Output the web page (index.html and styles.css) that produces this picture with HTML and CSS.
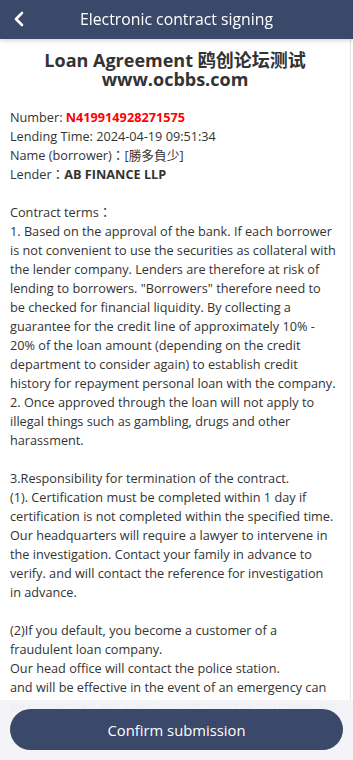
FILE: index.html
```html
<!DOCTYPE html>
<html>
  <head>
    <meta charset="utf-8" />
    <meta name="viewport" content="width=device-width, initial-scale=1" />
    <title>Electronic contract signing</title>
    <link rel="stylesheet" href="styles.css">
  </head>

  <body>
    <div class="header">
      <a class="back" href="#">
        <svg width="14" height="16" viewBox="0 0 14 16">
          <polyline points="10,2 4,8 10,14" fill="none" stroke="#fff" stroke-width="2.6" stroke-linecap="round" stroke-linejoin="round" />
        </svg>
      </a>
      <div class="title">Electronic contract signing</div>
    </div>

    <div class="content">
      <h2 class="doc-title">Loan Agreement 鸥创论坛测试<br />www.ocbbs.com</h2>

      <div class="info">
        Number: <b class="red">N419914928271575</b><br />
        Lending Time: 2024-04-19 09:51:34<br />
        Name (borrower)：[勝多負少]<br />
        Lender：<b>AB FINANCE LLP</b>
      </div>

      <div class="terms">
        <br />
        Contract terms：<br />
        1. Based on the approval of the bank. If each borrower is not convenient to use the securities as collateral with the lender company. Lenders are therefore at risk of lending to borrowers. "Borrowers" therefore need to be checked for financial liquidity. By collecting a guarantee for the credit line of approximately 10% - 20% of the loan amount (depending on the credit department to consider again) to establish credit history for repayment personal loan with the company.<br />
        2. Once approved through the loan will not apply to illegal things such as gambling, drugs and other harassment.<br />
        <br />
        3.Responsibility for termination of the contract.<br />
        (1). Certification must be completed within 1 day if certification is not completed within the specified time. Our headquarters will require a lawyer to intervene in the investigation. Contact your family in advance to verify. and will contact the reference for investigation in advance.<br />
        <br />
        (2)If you default, you become a customer of a fraudulent loan company.<br />
        Our head office will contact the police station.<br />
        and will be effective in the event of an emergency can be prosecuted and sued in court, and the borrower will be responsible for all costs of the lawsuit and all legal consequences.<br />
        <br />
        4. Both parties agree that this contract shall take effect from the date of signing.
      </div>
    </div>

    <div class="footer">
      <button class="submit">Confirm submission</button>
    </div>
  </body>
</html>
```

FILE: styles.css
```css
html {
  font-family: "Open Sans", "Noto Sans CJK TC", sans-serif;
  font-size: 12.7px;
}

body {
  margin: 0;
  background: #fff;
  color: #333;
}

.header {
  position: fixed;
  top: 0;
  left: 0;
  right: 0;
  height: 39px;
  background: #3a4869;
  box-shadow: 0 2px 4px rgba(0, 0, 0, 0.15);
  display: flex;
  align-items: center;
  justify-content: center;
  z-index: 2;
}

.back {
  position: absolute;
  left: 12px;
  top: 11px;
  display: flex;
}

.title {
  color: #fff;
  font-size: 15.8px;
  margin-top: -1px;
}

.content {
  padding: 39px 13px 80px 10px;
  border-right: 1px solid #e4e4e4;
  margin-right: 2px;
}

.doc-title {
  margin: 12px -3px 0 0;
  text-align: center;
  font-size: 18px;
  line-height: 19px;
  font-weight: bold;
  font-family: "Open Sans", "Noto Sans CJK SC", sans-serif;
  color: #333;
}

.info {
  margin-top: 19px;
  line-height: 19px;
}

.info b {
  font-weight: bold;
}

.red {
  color: #f00;
}

.terms {
  line-height: 19px;
}

.footer {
  position: fixed;
  left: 0;
  right: 0;
  bottom: 0;
  height: 60px;
  background: rgba(244, 244, 248, 0.97);
  display: flex;
  align-items: center;
  padding: 0 10px;
  z-index: 2;
}

.submit {
  flex: 1;
  height: 41px;
  margin-top: -1px;
  border: none;
  border-radius: 21px;
  background: #3a4869;
  color: #fff;
  font-family: "Open Sans", sans-serif;
  font-size: 14.8px;
}
```
